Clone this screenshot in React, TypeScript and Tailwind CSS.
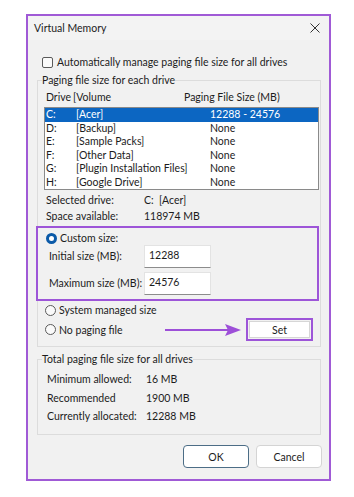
import React from "react";

const drives = [
  { letter: "C:", volume: "[Acer]", size: "12288 - 24576" },
  { letter: "D:", volume: "[Backup]", size: "None" },
  { letter: "E:", volume: "[Sample Packs]", size: "None" },
  { letter: "F:", volume: "[Other Data]", size: "None" },
  { letter: "G:", volume: "[Plugin Installation Files]", size: "None" },
  { letter: "H:", volume: "[Google Drive]", size: "None" },
];

function Radio({ checked }: { checked?: boolean }) {
  if (checked) {
    return (
      <span className="w-[11px] h-[11px] rounded-full border-[3px] border-[#0b5aa8] bg-white shrink-0" />
    );
  }
  return <span className="w-[11px] h-[11px] rounded-full border border-[#5a5a5a] bg-[#fafafa] shrink-0" />;
}

function SizeInput({ label, value }: { label: string; value: string }) {
  return (
    <div className="flex items-center h-[23px]">
      <span className="w-[106px] pl-[11px]">{label}</span>
      <div className="w-[67px] h-[23px] bg-white border border-[#e3e3e3] border-b-[#8c8c8c] pl-[4px] pt-[2px] leading-[14px]">
        {value}
      </div>
    </div>
  );
}

export default function App() {
  return (
    <div className="w-[354px] h-[497px] bg-white pt-[14px] pl-[26px] text-[10.5px] text-[#1c1c1c] whitespace-nowrap" style={{ fontFamily: "Lato, 'Open Sans', sans-serif" }}>
      <div className="w-[305px] h-[467px] border-2 border-[#a05ad6] bg-[#f1f1f1] flex flex-col">
        {/* title bar */}
        <div className="h-[24px] flex items-center justify-between pl-[6px] pr-[9px] bg-[#f3f3f3]">
          <span className="leading-[14px]">Virtual Memory</span>
          <svg width="10" height="10" viewBox="0 0 10 10" className="text-[#333]">
            <path d="M0.5 0.5 L9.5 9.5 M9.5 0.5 L0.5 9.5" stroke="currentColor" strokeWidth="1" />
          </svg>
        </div>

        <div className="mt-[15px] ml-[14px] flex items-center h-[14px] gap-[4px]">
          <span className="w-[11px] h-[11px] rounded-[2px] border border-[#5a5a5a] bg-[#fafafa]" />
          <span className="leading-[14px]">Automatically manage paging file size for all drives</span>
        </div>

        <fieldset className="mt-[4px] ml-[9px] w-[284px] border border-[#dcdcdc] pb-[5px]">
          <legend className="ml-[4px] leading-[14px]">Paging file size for each drive</legend>

          <div className="mt-[3px] ml-[8px] flex h-[14px] leading-[14px]">
            <span className="w-[27px]">Drive</span>
            <span className="w-[111px]">[Volume</span>
            <span>Paging File Size (MB)</span>
          </div>

          <div className="mt-[3px] ml-[6px] w-[275px] h-[83px] border border-[#8a8a8a] bg-white">
            {drives.map((d, i) => (
              <div
                key={d.letter}
                className={`flex h-[13.5px] leading-[13.5px] pl-[1px] ${i === 0 ? "bg-[#0c66c2] text-white" : ""}`}
              >
                <span className="w-[30px]">{d.letter}</span>
                <span className="w-[134px]">{d.volume}</span>
                <span>{d.size}</span>
              </div>
            ))}
          </div>

          <div className="mt-[3px] ml-[8px] flex h-[16px] items-center">
            <span className="w-[98px]">Selected drive:</span>
            <span>C:&nbsp;&nbsp;[Acer]</span>
          </div>
          <div className="ml-[8px] flex h-[16px] items-center">
            <span className="w-[98px]">Space available:</span>
            <span>118974 MB</span>
          </div>

          <div className="mt-[1px] -ml-[2px] w-[283px] h-[75px] border-2 border-[#9d55d8] pt-[3px] flex flex-col">
            <div className="flex items-center h-[14px] pl-[8px] gap-[3px]">
              <Radio checked />
              <span className="leading-[14px]">Custom size:</span>
            </div>
            <SizeInput label="Initial size (MB):" value="12288" />
            <div className="mt-[4px]">
              <SizeInput label="Maximum size (MB):" value="24576" />
            </div>
          </div>

          <div className="mt-[2px] flex items-center h-[14px] pl-[7px] gap-[3px]">
            <Radio />
            <span className="leading-[14px]">System managed size</span>
          </div>
          <div className="mt-[1px] flex items-center h-[23px] pl-[7px]">
            <Radio />
            <span className="ml-[3px] leading-[14px] w-[106px]">No paging file</span>
            <svg width="76" height="14" viewBox="0 0 76 14">
              <path d="M0 7 H64" stroke="#9d4fd8" strokeWidth="2.2" />
              <path d="M60 1 L76 7 L60 13 L63 7 Z" fill="#9d4fd8" />
            </svg>
            <div className="ml-[5px] w-[67px] h-[23px] border-2 border-[#9d55d8] p-[1px]">
              <div className="w-full h-full bg-white border border-[#d6d6d6] flex items-center justify-center leading-[14px]">
                Set
              </div>
            </div>
          </div>
        </fieldset>

        <fieldset className="mt-[5px] ml-[9px] w-[284px] border border-[#dcdcdc] pb-[8px]">
          <legend className="ml-[4px] leading-[14px]">Total paging file size for all drives</legend>
          <div className="mt-[5px] ml-[9px] flex flex-col">
            <div className="flex h-[18px] items-center">
              <span className="w-[99px]">Minimum allowed:</span>
              <span>16 MB</span>
            </div>
            <div className="flex h-[19px] items-center">
              <span className="w-[99px]">Recommended</span>
              <span>1900 MB</span>
            </div>
            <div className="flex h-[18px] items-center">
              <span className="w-[99px]">Currently allocated:</span>
              <span>12288 MB</span>
            </div>
          </div>
        </fieldset>

        <div className="mt-[10px] mr-[7px] flex justify-end gap-[7px]">
          <button className="w-[66px] h-[23px] rounded-[4px] border border-[#4c6d86] bg-white leading-[14px]">OK</button>
          <button className="w-[66px] h-[23px] rounded-[4px] border border-[#d4d4d4] bg-white leading-[14px]">Cancel</button>
        </div>
      </div>
    </div>
  );
}
